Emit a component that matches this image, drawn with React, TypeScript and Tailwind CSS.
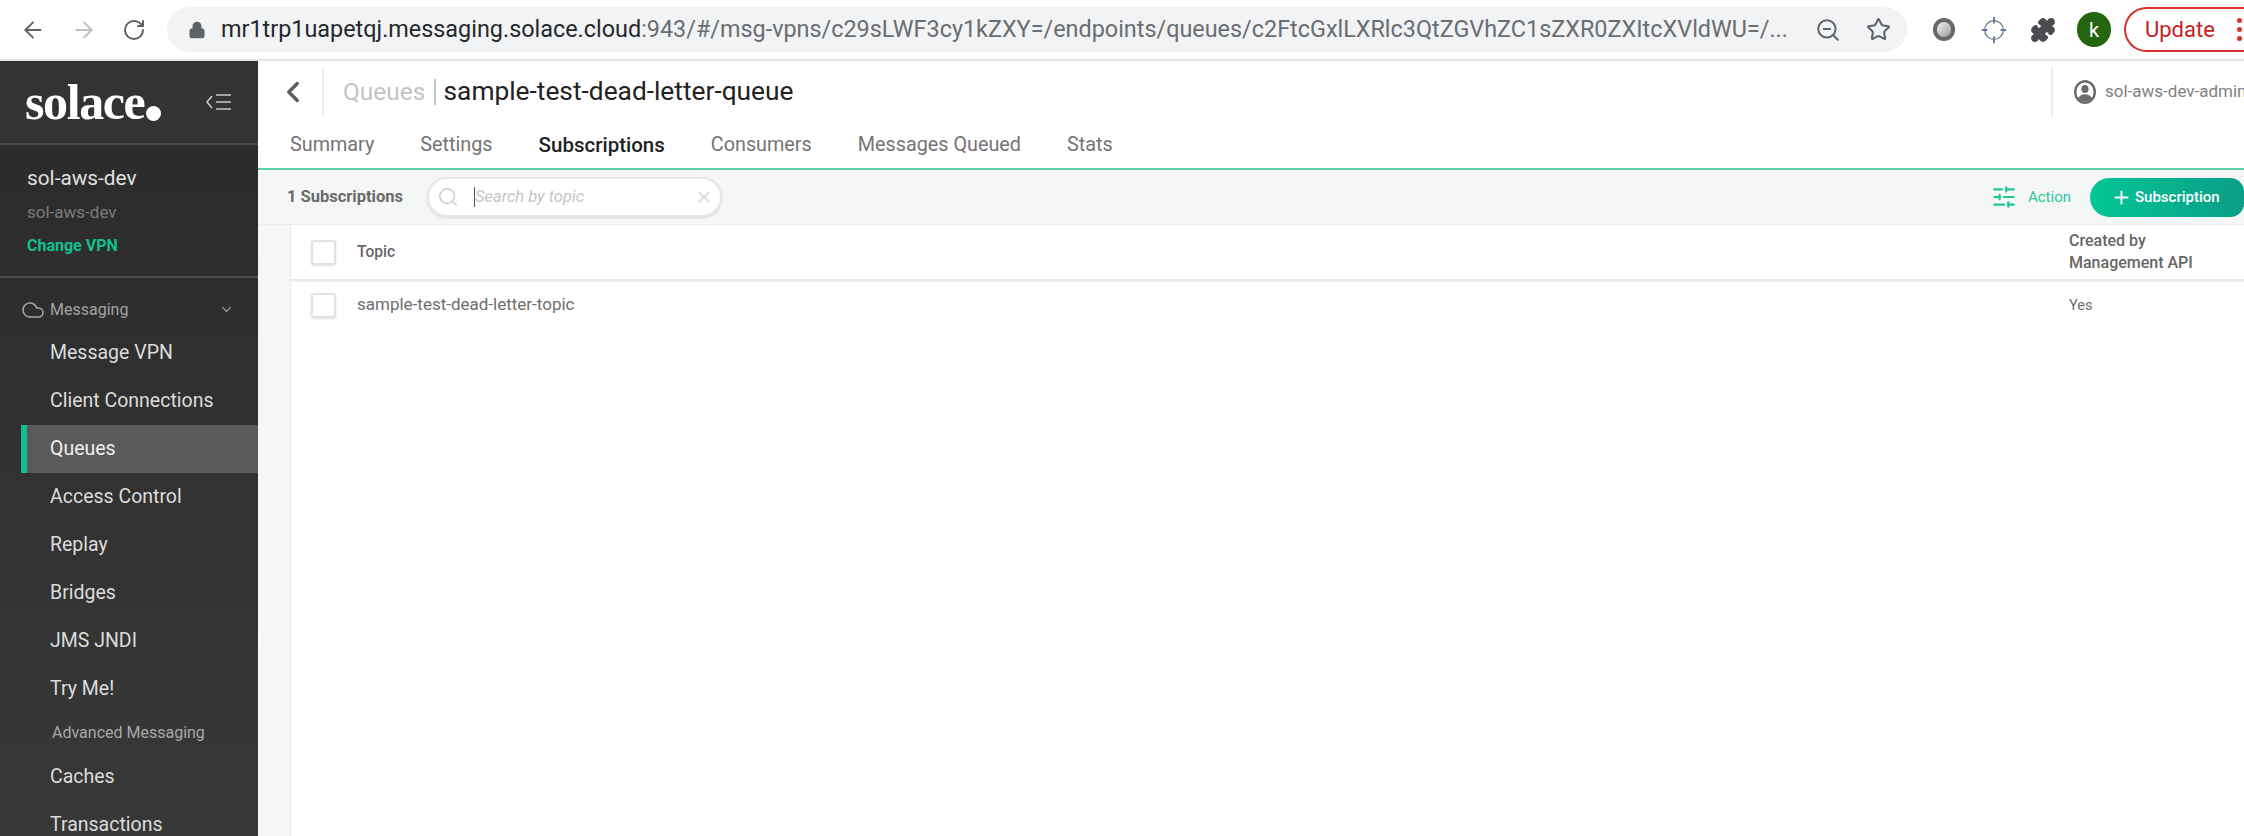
import { ArrowLeft, ArrowRight, ChevronDown, ChevronLeft, Cloud, Lock, Plus, Puzzle, RotateCw, Search, SlidersHorizontal, Star, X, ZoomOut } from 'lucide-react'

const sans = { fontFamily: 'Roboto, sans-serif' }

const navItems = ['Message VPN', 'Client Connections', 'Queues', 'Access Control', 'Replay', 'Bridges', 'JMS JNDI', 'Try Me!']
const tabs = ['Summary', 'Settings', 'Subscriptions', 'Consumers', 'Messages Queued', 'Stats']

function BrowserBar() {
  return (
    <div className="flex h-[61px] shrink-0 items-center border-b-2 border-[#e2e4e6] bg-white pl-[20px]">
      <ArrowLeft className="h-[26px] w-[26px] shrink-0 text-[#5f6368]" strokeWidth={1.8} />
      <ArrowRight className="ml-[25px] h-[26px] w-[26px] shrink-0 text-[#bcc0c4]" strokeWidth={1.8} />
      <RotateCw className="ml-[25px] h-[24px] w-[24px] shrink-0 text-[#5f6368]" strokeWidth={2} />
      <div className="ml-[21px] flex h-[45px] w-[1740px] shrink-0 items-center rounded-full bg-[#f1f3f4] pl-[21px] pr-[16px]">
        <Lock className="h-[18px] w-[18px] shrink-0 fill-[#5f6368] text-[#5f6368]" strokeWidth={2} />
        <div className="ml-[15px] w-[1574px] shrink-0 overflow-hidden whitespace-nowrap text-[23.4px] text-[#6a6d71]">
          <span className="text-[#26282b]">mr1trp1uapetqj.messaging.solace.cloud</span>
          :943/#/msg-vpns/c29sLWF3cy1kZXY=/endpoints/queues/c2FtcGxlLXRlc3QtZGVhZC1sZXR0ZXItcXVldWU=/...
        </div>
        <ZoomOut className="ml-[20px] h-[26px] w-[26px] shrink-0 text-[#5f6368]" strokeWidth={1.8} />
        <Star className="ml-[25px] h-[25px] w-[25px] shrink-0 text-[#5f6368]" strokeWidth={2} />
      </div>
      <div className="ml-[26px] h-[23px] w-[22px] shrink-0 rounded-full border-[4px] border-[#66686b] bg-gradient-to-br from-[#f4f4f4] to-[#9a9a9a]" />
      <svg className="ml-[24px] h-[30px] w-[30px] shrink-0" viewBox="0 0 32 32" fill="none">
        <circle cx="16" cy="16" r="10" stroke="#6f7480" strokeWidth="1.4" />
        <path d="M16 2v7M16 23v7M3 16h6M23 16h6" stroke="#5d79ad" strokeWidth="2" />
      </svg>
      <Puzzle className="ml-[21px] h-[26px] w-[26px] shrink-0 fill-[#4a4c50] text-[#4a4c50]" />
      <div className="ml-[21px] flex h-[35px] w-[34px] shrink-0 items-center justify-center rounded-full bg-[#24660f] text-[20px] text-white">k</div>
      <div className="ml-[13px] flex h-[45px] w-[130px] shrink-0 items-center rounded-l-full border-y-2 border-l-2 border-[#d9302a] pl-[19px] text-[22px] text-[#c5221f]">
        <span>Update</span>
        <span className="ml-[22px] flex flex-col gap-[4px]">
          <span className="h-[5px] w-[5px] rounded-full bg-[#d93025]" />
          <span className="h-[5px] w-[5px] rounded-full bg-[#d93025]" />
          <span className="h-[5px] w-[5px] rounded-full bg-[#d93025]" />
        </span>
      </div>
    </div>
  )
}

function Sidebar() {
  return (
    <aside className="flex w-[258px] shrink-0 flex-col overflow-hidden bg-gradient-to-b from-[#2a2a2a] to-[#383838]">
      <div className="flex h-[84px] shrink-0 items-center justify-between border-b-2 border-[#4c4c4c] bg-[#333333] pl-[25px] pr-[26px]">
        <div className="flex items-end text-[50px] font-bold leading-none tracking-[-1.4px] text-white" style={{ fontFamily: '"Liberation Serif", serif' }}>
          solace
          <span className="mb-[6px] ml-[2px] h-[15px] w-[15px] rounded-full bg-white" />
        </div>
        <svg className="h-[18px] w-[26px]" viewBox="0 0 26 18" fill="none" stroke="#c8c8c8" strokeWidth="1.6">
          <path d="M6 3L1 9l5 6M10 2h15M10 9h15M10 16h15" />
        </svg>
      </div>
      <div className="flex h-[133px] shrink-0 flex-col border-b-2 border-[#4c4c4c] pl-[27px]">
        <div className="mt-[19px] text-[20.8px] leading-[28px] text-[#e0e0e0]">sol-aws-dev</div>
        <div className="mt-[9px] text-[17px] leading-[22px] text-[#7c7c7c]">sol-aws-dev</div>
        <div className="mt-[12px] text-[16px] font-bold leading-[22px] text-[#12c08f]">Change VPN</div>
      </div>
      <div className="flex h-[51px] shrink-0 items-center pl-[21px] pr-[24px] pt-[12px] text-[16px] text-[#a3a3a3]">
        <Cloud className="h-[24px] w-[24px] text-[#a8a8a8]" strokeWidth={1.5} />
        <span className="ml-[5px] flex-1">Messaging</span>
        <ChevronDown className="h-[15px] w-[15px] text-[#a8a8a8]" />
      </div>
      {navItems.map((item) => (
        <div key={item} className={item === 'Queues' ? 'ml-[21px] flex h-[48px] shrink-0 items-center border-l-[6px] border-[#12c08f] bg-[#5a5a5a] pl-[23px] text-[19.5px] text-[#f0f0f0]' : 'ml-[21px] flex h-[48px] shrink-0 items-center pl-[29px] text-[19.5px] text-[#dcdcdc]'}>
          {item}
        </div>
      ))}
      <div className="flex h-[40px] shrink-0 items-center pl-[52px] text-[16px] text-[#a8a8a8]">Advanced Messaging</div>
      <div className="ml-[21px] flex h-[48px] shrink-0 items-center pl-[29px] text-[19.5px] text-[#dcdcdc]">Caches</div>
      <div className="ml-[21px] flex h-[48px] shrink-0 items-center pl-[29px] text-[19.5px] text-[#dcdcdc]">Transactions</div>
    </aside>
  )
}

function PageHeader() {
  return (
    <div className="flex h-[62px] shrink-0 items-center bg-white">
      <div className="flex h-[48px] w-[66px] items-center justify-center border-r-2 border-[#ececec]">
        <ChevronLeft className="ml-[5px] h-[34px] w-[34px] text-[#5c5c5c]" strokeWidth={2.4} />
      </div>
      <div className="ml-[19px] text-[24.5px] text-[#c4c4c4]">Queues</div>
      <div className="ml-[8px] h-[26px] w-[2px] bg-[#c8c8c8]" />
      <div className="ml-[8px] flex-1 text-[26.3px] text-[#222222]">sample-test-dead-letter-queue</div>
      <div className="flex h-[50px] w-[193px] shrink-0 items-center overflow-hidden whitespace-nowrap border-l-2 border-[#ececec] pl-[20px] text-[17px] text-[#808080]">
        <svg className="h-[26px] w-[24px] shrink-0" viewBox="0 0 24 26" fill="#6c6c6c">
          <path fillRule="evenodd" d="M12 1a11 12 0 1 0 0 24 11 12 0 0 0 0-24zm0 2.4a8.6 9.6 0 1 1 0 19.2 8.6 9.6 0 0 1 0-19.2z" />
          <ellipse cx="12" cy="10" rx="3.6" ry="4" />
          <path d="M5 19.5c1.5-3 4-4.2 7-4.2s5.500 1.200 7 4.200c-1.800 2-4.200 3.200-7 3.200s-5.200-1.200-7-3.200z" />
        </svg>
        <span className="ml-[8px]">sol-aws-dev-admin</span>
      </div>
    </div>
  )
}

function Tabs() {
  return (
    <div className="flex h-[47px] shrink-0 border-b-2 border-[#5dcfae] bg-white pl-[32px]">
      {tabs.map((tab) => (
        <div key={tab} className={tab === 'Subscriptions' ? '-mb-[3px] mr-[46px] flex h-[42px] items-start pt-[7px] text-[20.5px] font-medium text-[#222222]' : 'mr-[46px] pt-[7px] text-[19.8px] text-[#747474]'}>
          {tab === 'Subscriptions' ? (
            <span className="-mx-[19px] h-[43px] border-b-[3px] border-[#6bd3b5] px-[19px]">{tab}</span>
          ) : (
            tab
          )}
        </div>
      ))}
    </div>
  )
}

function Toolbar() {
  return (
    <div className="flex h-[55px] shrink-0 items-center border-b border-[#ececec] bg-[#f5f7f7] pl-[29px]">
      <div className="w-[140px] shrink-0 text-[16.5px] font-bold text-[#6a6a6a]">1 Subscriptions</div>
      <div className="flex h-[40px] w-[295px] shrink-0 items-center rounded-full border-2 border-[#e6e8e8] bg-white pl-[8px] pr-[6px] shadow-sm">
        <Search className="h-[22px] w-[22px] shrink-0 text-[#c8cccc]" strokeWidth={1.6} />
        <span className="ml-[15px] h-[20px] w-[1px] bg-[#555555]" />
        <span className="flex-1 text-[16.5px] italic text-[#c6c6c6]">Search by topic</span>
        <X className="h-[20px] w-[20px] shrink-0 text-[#cfd2d2]" strokeWidth={1.6} />
      </div>
      <div className="flex-1" />
      <SlidersHorizontal className="h-[26px] w-[26px] shrink-0 text-[#1fc698]" strokeWidth={2} />
      <div className="ml-[11px] text-[15px] text-[#2cc79c]">Action</div>
      <div className="ml-[19px] flex h-[39px] w-[154px] shrink-0 items-center rounded-l-[20px] rounded-r-[14px] bg-gradient-to-r from-[#03c695] to-[#0a9e88] pl-[21px] text-[15px] font-medium text-white">
        <Plus className="h-[21px] w-[21px]" strokeWidth={2.2} />
        <span className="ml-[3px]">Subscription</span>
      </div>
    </div>
  )
}

function Checkbox() {
  return <div className="h-[25px] w-[25px] shrink-0 rounded-[3px] border-2 border-[#e2e2e2] bg-white shadow-sm" />
}

function SubscriptionTable() {
  return (
    <div className="flex min-h-0 flex-1 bg-[#f5f7f7] pl-[32px]">
      <div className="flex-1 border-l border-[#ececec] bg-white">
        <div className="flex h-[57px] items-center border-b-[3px] border-[#ebebeb] pl-[20px] text-[16px] font-medium text-[#666666]">
          <Checkbox />
          <div className="ml-[21px] flex-1 pt-[2px] text-[15.6px]">Topic</div>
          <div className="w-[175px] shrink-0 leading-[22px]">
            <div>Created by</div>
            <div>Management API</div>
          </div>
        </div>
        <div className="flex h-[46px] items-center pl-[20px] text-[14.5px] text-[#6e6e6e]">
          <Checkbox />
          <div className="ml-[21px] flex-1 text-[17px]">sample-test-dead-letter-topic</div>
          <div className="w-[175px] shrink-0 pt-[2px]">Yes</div>
        </div>
      </div>
    </div>
  )
}

export default function App() {
  return (
    <div className="flex h-[836px] w-[2244px] flex-col overflow-hidden bg-white" style={sans}>
      <BrowserBar />
      <div className="flex min-h-0 flex-1">
        <Sidebar />
        <main className="flex min-w-0 flex-1 flex-col">
          <PageHeader />
          <Tabs />
          <Toolbar />
          <SubscriptionTable />
        </main>
      </div>
    </div>
  )
}
